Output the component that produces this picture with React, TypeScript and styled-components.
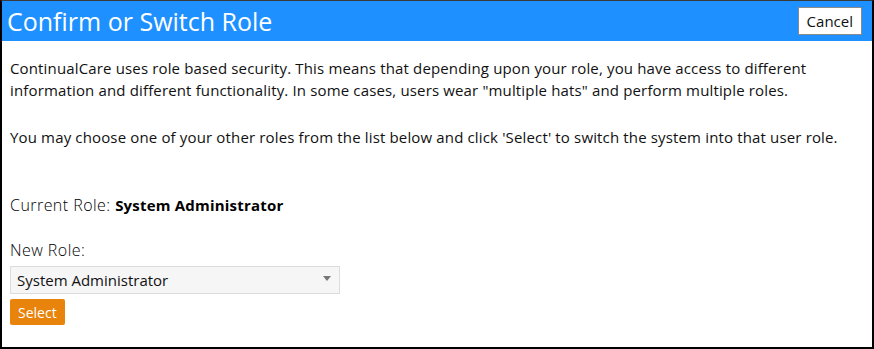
import React from "react";
import styled, { createGlobalStyle } from "styled-components";

const Global = createGlobalStyle`
  html, body { margin: 0; padding: 0; background: #fff; }
  body { font-family: "Open Sans", "Noto Sans", sans-serif; color: #111; }
  * { box-sizing: border-box; }
`;

const Frame = styled.div`
  width: 874px;
  height: 349px;
  border-top: 1px solid #3a3a3a;
  border-left: 2px solid #000;
  border-right: 2px solid #000;
  border-bottom: 2px solid #000;
  display: flex;
  flex-direction: column;
`;

const Header = styled.div`
  height: 40px;
  background: #1e90ff;
  display: flex;
  align-items: center;
  justify-content: space-between;
  padding: 0 10px 0 5px;
`;

const Title = styled.h1`
  margin: 0;
  font-weight: 400;
  font-size: 25px;
  color: #fff;
`;

const CancelButton = styled.button`
  font-family: inherit;
  font-size: 15px;
  color: #111;
  background: #fff;
  border: 1px solid #8a8a8a;
  height: 28px;
  padding: 0 8px;
`;

const Body = styled.div`
  padding: 16px 8px 0 8px;
  display: flex;
  flex-direction: column;
`;

const Para = styled.p<{ $gap: number }>`
  margin: 0 0 ${(p) => p.$gap}px 0;
  font-size: 15px;
  line-height: 22px;
  letter-spacing: 0.15px;
`;

const CurrentRow = styled.div`
  margin-top: 25px;
  font-size: 16px;
  font-weight: 300;
  color: #000;
  letter-spacing: 0.45px;
`;

const Strong = styled.span`
  font-weight: 700;
  font-size: 15px;
  letter-spacing: 0.2px;
`;

const Label = styled.div`
  margin-top: 23px;
  font-size: 16px;
  font-weight: 300;
  color: #000;
  letter-spacing: 0.45px;
`;

const SelectBox = styled.div`
  margin-top: 5px;
  width: 330px;
  height: 28px;
  background: #f6f6f6;
  border: 1px solid #dcdcdc;
  display: flex;
  align-items: center;
  justify-content: space-between;
  padding: 0 8px 0 6px;
  font-size: 15px;
`;

const Caret = styled.span`
  width: 0;
  height: 0;
  border-left: 4px solid transparent;
  border-right: 4px solid transparent;
  border-top: 5px solid #777;
  margin-bottom: 4px;
`;

const SelectButton = styled.button`
  margin-top: 5px;
  align-self: flex-start;
  font-family: inherit;
  font-size: 14px;
  color: #fff;
  background: #e8830c;
  border: none;
  border-radius: 2px;
  height: 26px;
  padding: 0 8px;
`;

export default function App() {
  return (
    <>
      <Global />
      <Frame>
        <Header>
          <Title>Confirm or Switch Role</Title>
          <CancelButton>Cancel</CancelButton>
        </Header>
        <Body>
          <Para $gap={25}>
            ContinualCare uses role based security. This means that depending upon your role, you have access to different
            information and different functionality. In some cases, users wear "multiple hats" and perform multiple roles.
          </Para>
          <Para $gap={21}>
            You may choose one of your other roles from the list below and click 'Select' to switch the system into that user role.
          </Para>
          <CurrentRow>
            Current Role: <Strong>System Administrator</Strong>
          </CurrentRow>
          <Label>New Role:</Label>
          <SelectBox>
            <span>System Administrator</span>
            <Caret />
          </SelectBox>
          <SelectButton>Select</SelectButton>
        </Body>
      </Frame>
    </>
  );
}
